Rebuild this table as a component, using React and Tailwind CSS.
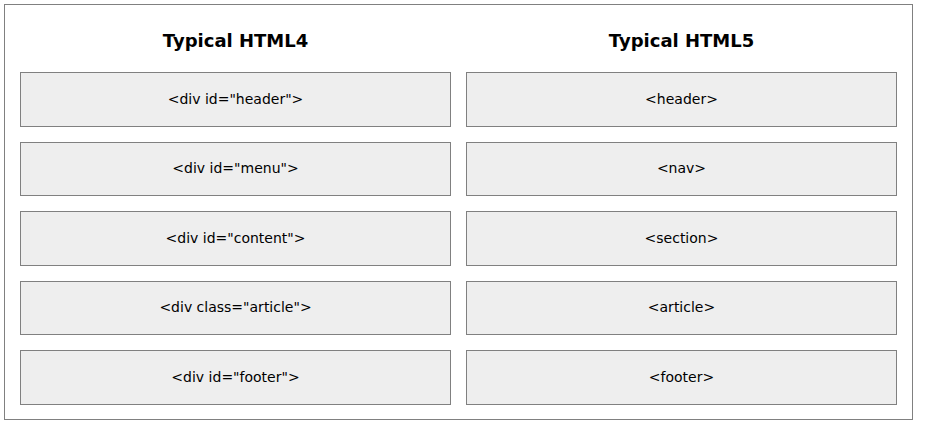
const html4 = ['<div id="header">', '<div id="menu">', '<div id="content">', '<div class="article">', '<div id="footer">'];
const html5 = ["<header>", "<nav>", "<section>", "<article>", "<footer>"];

function Column({ title, items }) {
  return (
    <div className="flex w-[431px] flex-col">
      <h2 className="flex h-[67px] items-center justify-center pt-[4px] text-[18px] font-bold text-black">{title}</h2>
      <div className="flex flex-col gap-[15px]">
        {items.map((t) => (
          <div
            key={t}
            className="flex h-[54.5px] items-center justify-center border border-[#808080] bg-[#eeeeee] text-[14px] text-black"
          >
            {t}
          </div>
        ))}
      </div>
    </div>
  );
}

export default function App() {
  return (
    <div className="bg-white p-[4px] font-['DejaVu_Sans',Verdana,sans-serif]">
      <div className="flex h-[416px] w-[909px] gap-[15px] border border-[#808080] px-[15px]">
        <Column title="Typical HTML4" items={html4} />
        <Column title="Typical HTML5" items={html5} />
      </div>
    </div>
  );
}
